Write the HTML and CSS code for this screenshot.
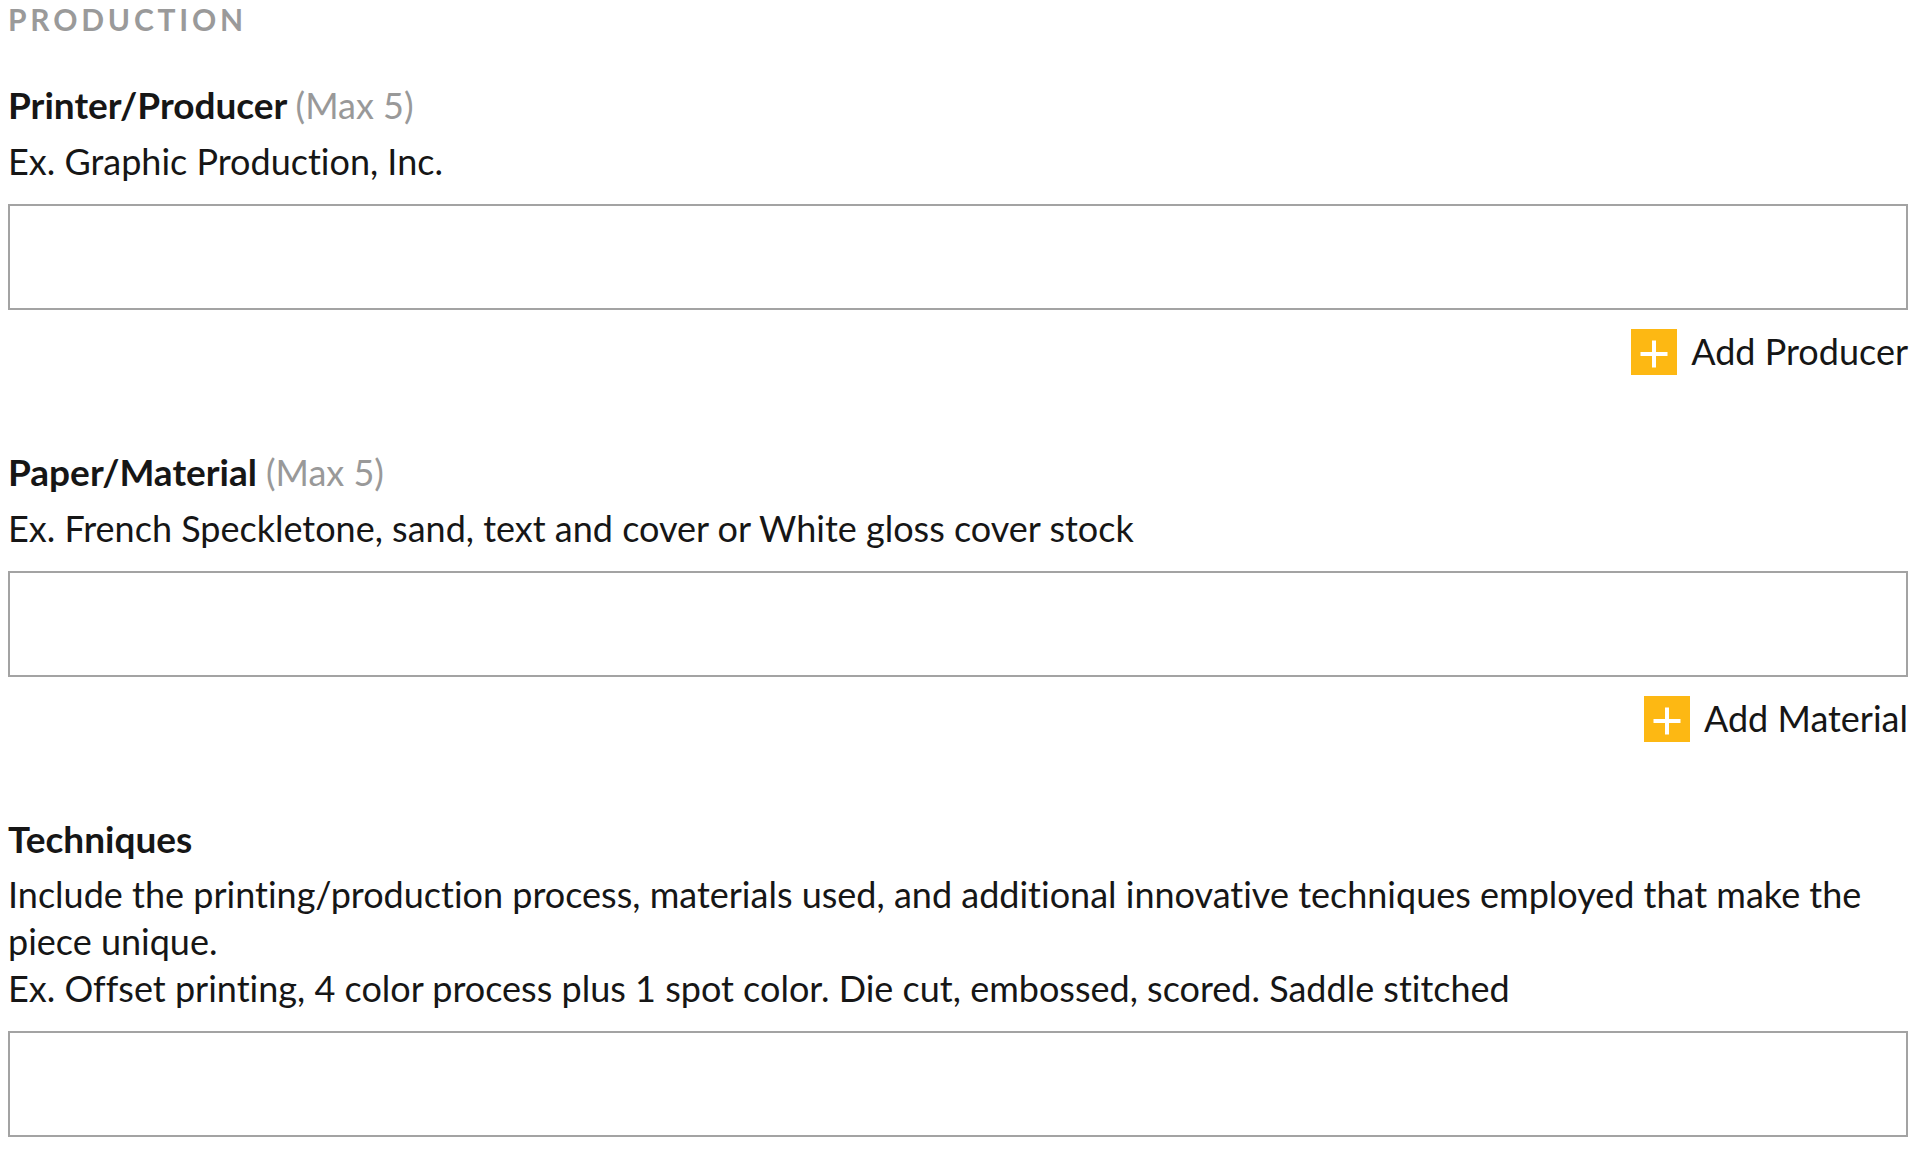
FILE: index.html
```
<!DOCTYPE html>
<html lang="en">
<head>
<meta charset="utf-8">
<title>Production</title>
<link rel="stylesheet" href="styles.css">
</head>
<body>
<main class="form">
  <h2 class="section-title">PRODUCTION</h2>

  <div class="field field-first">
    <div class="label">Printer/Producer <span class="max">(Max 5)</span></div>
    <div class="desc">Ex. Graphic Production, Inc.</div>
    <input class="box" type="text">
    <div class="add-row">
      <button class="add" type="button">
        <span class="plus"><svg viewBox="0 0 46 46" width="46" height="46"><rect x="0" y="0" width="46" height="46" fill="#fdb813"/><path d="M23 11.5V38.5M9.5 25H36.5" stroke="#ffffff" stroke-width="4" fill="none"/></svg></span>
        <span class="add-text">Add Producer</span>
      </button>
    </div>
  </div>

  <div class="field">
    <div class="label">Paper/Material <span class="max">(Max 5)</span></div>
    <div class="desc">Ex. French Speckletone, sand, text and cover or White gloss cover stock</div>
    <input class="box" type="text">
    <div class="add-row">
      <button class="add" type="button">
        <span class="plus"><svg viewBox="0 0 46 46" width="46" height="46"><rect x="0" y="0" width="46" height="46" fill="#fdb813"/><path d="M23 11.5V38.5M9.5 25H36.5" stroke="#ffffff" stroke-width="4" fill="none"/></svg></span>
        <span class="add-text">Add Material</span>
      </button>
    </div>
  </div>

  <div class="field">
    <div class="label">Techniques</div>
    <div class="desc">Include the printing/production process, materials used, and additional innovative techniques employed that make the<br>piece unique.<br>Ex. Offset printing, 4 color process plus 1 spot color. Die cut, embossed, scored. Saddle stitched</div>
    <input class="box" type="text">
  </div>
</main>
</body>
</html>
```
FILE: styles.css
```
html, body {
  margin: 0;
  padding: 0;
  background: #ffffff;
}

body {
  font-family: Lato, "Open Sans", "Liberation Sans", sans-serif;
  color: #161616;
  font-variant-ligatures: none;
  font-feature-settings: "liga" 0, "clig" 0;
}

.form {
  width: 1900px;
  margin-left: 8px;
}

.section-title {
  margin: 0;
  font-size: 30px;
  line-height: 36px;
  font-weight: 700;
  letter-spacing: 3.8px;
  color: #9a9a9a;
  padding-top: 1px;
}

.field {
  margin-top: 73px;
}

.field-first {
  margin-top: 44px;
}

.label {
  font-size: 37px;
  line-height: 47px;
  font-weight: 700;
  color: #161616;
}

.max {
  font-size: 36px;
  font-weight: 400;
  color: #999999;
}

.desc {
  margin-top: 9px;
  font-size: 36px;
  line-height: 47px;
  color: #161616;
}

.box {
  display: block;
  box-sizing: border-box;
  width: 100%;
  height: 106px;
  margin: 19px 0 0;
  padding: 0 16px;
  border: 2px solid #a3a3a3;
  border-radius: 0;
  background: #ffffff;
  font-family: inherit;
  font-size: 36px;
  outline: none;
}

.add-row {
  display: flex;
  justify-content: flex-end;
  margin-top: 18px;
}

.add {
  display: flex;
  align-items: center;
  gap: 14px;
  padding: 0;
  border: 0;
  background: none;
  cursor: pointer;
  font-family: inherit;
  color: #161616;
}

.plus {
  display: block;
  width: 46px;
  height: 46px;
}

.plus svg {
  display: block;
}

.add-text {
  font-size: 36px;
  line-height: 47px;
}
```
